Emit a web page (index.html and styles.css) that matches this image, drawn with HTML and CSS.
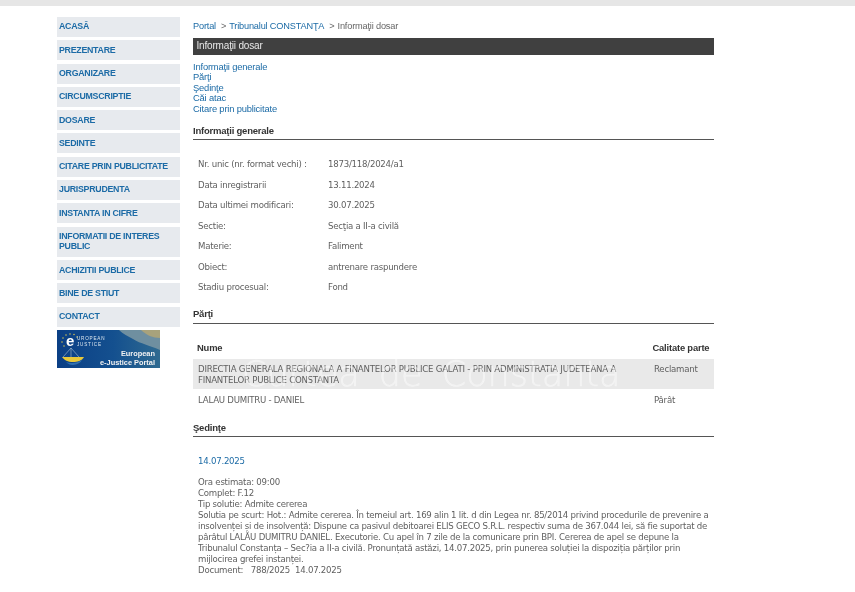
FILE: index.html
```html
<!DOCTYPE html>
<html lang="ro">
<head>
<meta charset="utf-8">
<title>Informații dosar</title>
<link rel="stylesheet" href="styles.css">
</head>
<body>
<div class="topbar"></div>
<div class="page">
  <nav class="sidebar">
    <a class="nav-item">ACASĂ</a>
    <a class="nav-item">PREZENTARE</a>
    <a class="nav-item">ORGANIZARE</a>
    <a class="nav-item">CIRCUMSCRIPTIE</a>
    <a class="nav-item">DOSARE</a>
    <a class="nav-item">SEDINTE</a>
    <a class="nav-item">CITARE PRIN PUBLICITATE</a>
    <a class="nav-item">JURISPRUDENTA</a>
    <a class="nav-item">INSTANTA IN CIFRE</a>
    <a class="nav-item">INFORMATII DE INTERES PUBLIC</a>
    <a class="nav-item">ACHIZITII PUBLICE</a>
    <a class="nav-item">BINE DE STIUT</a>
    <a class="nav-item">CONTACT</a>
    <div class="banner">
      <svg class="banner-art" viewBox="0 0 103 38" width="103" height="38" aria-hidden="true">
        <defs>
          <linearGradient id="bg" x1="0" x2="1" y1="0" y2="0">
            <stop offset="0" stop-color="#0b3f85"/>
            <stop offset="0.55" stop-color="#14508f"/>
            <stop offset="1" stop-color="#2f6a90"/>
          </linearGradient>
        </defs>
        <rect width="103" height="38" fill="url(#bg)"/>
        <path d="M62 0H103V20C92 15 84 14 76 9C71 6 66 4 62 0Z" fill="#6f8fa0"/>
        <path d="M84 0H103V8C96 8 89 5 84 0Z" fill="#a8a27c"/>
        <g fill="#f2d64a">
          <circle cx="13" cy="4" r=".7"/><circle cx="17" cy="4.500" r=".7"/><circle cx="9" cy="5" r=".7"/>
          <circle cx="6" cy="8" r=".7"/><circle cx="5" cy="12" r=".7"/><circle cx="7" cy="16" r=".7"/>
          <circle cx="20" cy="7" r=".7"/>
        </g>
        <path d="M14 18L6 27M14 18L22 27M14 18V28" stroke="#a9bfd2" stroke-width=".6" fill="none"/>
        <path d="M5 27H27C25 31 20 32 16 32C11 32 7 30 5 27Z" fill="#e8c83a"/>
        <path d="M9 32C14 34 20 33 25 30C23 34 18 35 15 35C13 35 11 34 9 32Z" fill="#2f6fb0"/>
      </svg>
      <span class="banner-e">e</span>
      <span class="banner-eu">UROPEAN<br>JUSTICE</span>
      <span class="banner-title">European<br>e-Justice Portal</span>
    </div>
  </nav>
  <main class="content">
    <div class="crumbs"><a>Portal</a><span class="sep">&gt;</span><a>Tribunalul CONSTANŢA</a><span class="sep">&gt;</span><span class="cur">Informaţii dosar</span></div>
    <h1 class="title-bar">Informaţii dosar</h1>
    <div class="anchors">
      <a>Informaţii generale</a>
      <a>Părţi</a>
      <a>Şedinţe</a>
      <a>Căi atac</a>
      <a>Citare prin publicitate</a>
    </div>
    <h2 class="section first">Informaţii generale</h2>
    <dl class="facts">
      <div class="fact"><dt>Nr. unic (nr. format vechi) :</dt><dd>1873/118/2024/a1</dd></div>
      <div class="fact"><dt>Data inregistrarii</dt><dd>13.11.2024</dd></div>
      <div class="fact"><dt>Data ultimei modificari:</dt><dd>30.07.2025</dd></div>
      <div class="fact"><dt>Sectie:</dt><dd>Secţia a II-a civilă</dd></div>
      <div class="fact"><dt>Materie:</dt><dd>Faliment</dd></div>
      <div class="fact"><dt>Obiect:</dt><dd>antrenare raspundere</dd></div>
      <div class="fact"><dt>Stadiu procesual:</dt><dd>Fond</dd></div>
    </dl>
    <h2 class="section s2">Părţi</h2>
    <div class="parties">
      <div class="row head"><div class="name">Nume</div><div class="role">Calitate parte</div></div>
      <div class="row shaded"><div class="name">DIRECTIA GENERALA REGIONALA A FINANTELOR PUBLICE GALATI - PRIN ADMINISTRATIA JUDETEANA A FINANTELOR PUBLICE CONSTANTA</div><div class="role">Reclamant</div></div>
      <div class="row plain"><div class="name">LALAU DUMITRU - DANIEL</div><div class="role">Pârât</div></div>
    </div>
    <h2 class="section s3">Şedinţe</h2>
    <div class="hearing">
      <div class="date">14.07.2025</div>
      <p>Ora estimata: 09:00<br>Complet: F.12<br>Tip solutie: Admite cererea<br>Solutia pe scurt: Hot.: Admite cererea. În temeiul art. 169 alin 1 lit. d din Legea nr. 85/2014 privind procedurile de prevenire a insolvenței și de insolvență: Dispune ca pasivul debitoarei ELIS GECO S.R.L. respectiv suma de 367.044 lei, să fie suportat de pârâtul LALĂU DUMITRU DANIEL. Executorie. Cu apel în 7 zile de la comunicare prin BPI. Cererea de apel se depune la Tribunalul Constanța – Sec?ia a II-a civilă. Pronunțată astăzi, 14.07.2025, prin punerea soluției la dispoziția părților prin mijlocirea grefei instanței.<br>Document: &nbsp; 788/2025 &nbsp;14.07.2025</p>
    </div>
    <div class="watermark">Curtea de Constanța</div>
  </main>
</div>
</body>
</html>
```

FILE: styles.css
```css
* { box-sizing: border-box; }
html, body { margin: 0; padding: 0; background: #fff; overflow: hidden; }
body { height: 592px; font-family: "DejaVu Sans", Verdana, sans-serif; font-size: 8.6px; letter-spacing: -0.24px; color: #5f5f5f; }
.topbar { height: 6px; background: #e6e6e6; }
.page { display: flex; align-items: flex-start; padding: 11px 0 0 57px; filter: blur(0.3px); }
.sidebar { width: 123px; display: flex; flex-direction: column; gap: 3.3px; flex: none; }
.nav-item {
  display: block; background: #e7eaee; color: #1c6ba6;
  font: bold 8.8px/10.3px "Liberation Sans", Arial, sans-serif; letter-spacing: -0.26px;
  padding: 4.4px 2px 5.3px;
}
.banner { position: relative; width: 103px; height: 38px; color: #fff; overflow: hidden; letter-spacing: 0; }
.banner-art { display: block; }
.banner-e { position: absolute; left: 9px; top: 3px; font: bold 15px/15px "Liberation Sans", sans-serif; }
.banner-eu { position: absolute; left: 20px; top: 6.5px; font: 4.6px/5.4px "Liberation Sans", sans-serif; letter-spacing: .8px; color: #dbe6ef; }
.banner-title { position: absolute; right: 5px; top: 20px; text-align: right; font: bold 7.4px/8.6px "Liberation Sans", sans-serif; color: #f2f2f2; }
.content { position: relative; width: 521px; margin-left: 13px; }
.crumbs { font: 9.2px/12px "Liberation Sans", Arial, sans-serif; letter-spacing: -0.17px; color: #666; padding-top: 2.5px; }
.crumbs a { color: #1c6ba6; }
.crumbs .sep { margin: 0 3px 0 5px; }
.title-bar {
  margin: 6px 0 0; height: 17px; background: #404040; color: #e8e8e8;
  font: normal 10px/16px "Liberation Sans", Arial, sans-serif; letter-spacing: -0.18px; padding-left: 3.5px;
}
.anchors { display: flex; flex-direction: column; margin-top: 7px; font: 9.4px/10.5px "Liberation Sans", Arial, sans-serif; letter-spacing: -0.18px; color: #1c6ba6; }
.section {
  margin: 0; font: bold 9.5px/12px "Liberation Sans", Arial, sans-serif; letter-spacing: -0.22px; color: #333;
  border-bottom: 1px solid #555;
}
.section.first { margin-top: 10.5px; height: 15.5px; }
.section.s2 { margin-top: 5px; height: 16px; }
.section.s3 { margin-top: 11px; height: 15px; }
.facts { margin: 19px 0 0; }
.fact { display: flex; height: 20.55px; align-items: flex-start; line-height: 11px; }
.fact dt { width: 135px; padding-left: 5px; }
.fact dd { margin: 0; }
.parties { margin-top: 11.5px; }
.row { display: flex; padding-left: 5px; }
.row .name { width: 456px; line-height: 11px; }
.row .role { line-height: 11px; }
.row.head { height: 23.5px; align-items: center; font: bold 9.4px/12px "Liberation Sans", Arial, sans-serif; letter-spacing: -0.18px; color: #333; padding-left: 4px; }
.row.head .name { width: 455.5px; }
.row.shaded { background: #e9e9e9; height: 30px; padding-top: 5.5px; }
.row.plain { height: 22px; padding-top: 6.5px; }
.hearing { padding: 19px 5px 0; }
.hearing .date { color: #1c6ba6; line-height: 11px; }
.hearing p { margin: 10.5px 0 0; line-height: 11px; }
.watermark {
  position: absolute; left: 49px; top: 335px; white-space: nowrap; letter-spacing: 0; word-spacing: 8px;
  font: 200 35px/44px "DejaVu Sans", sans-serif; color: rgba(255,255,255,.42); -webkit-text-stroke: .4px rgba(255,255,255,.42); pointer-events: none;
}
```
